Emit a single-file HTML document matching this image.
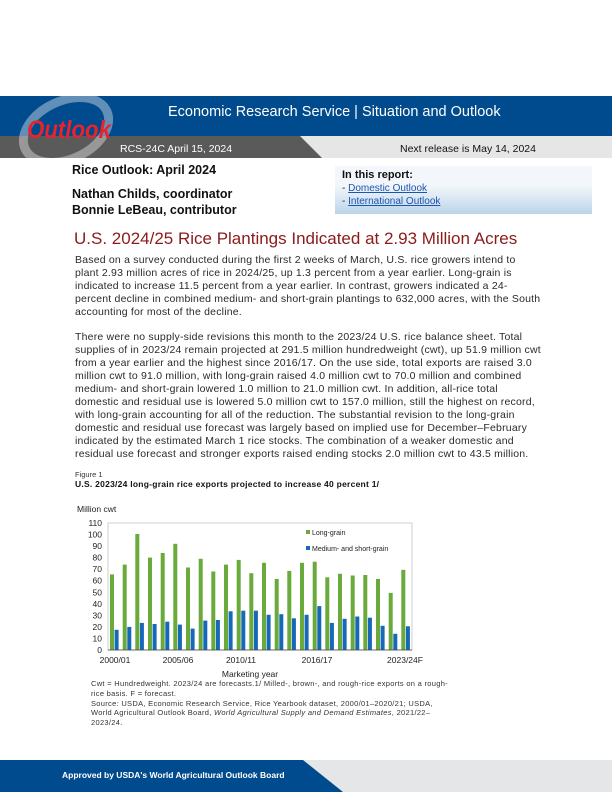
<!DOCTYPE html>
<html><head><meta charset="utf-8"><style>
*{margin:0;padding:0;box-sizing:border-box}
body{width:612px;height:792px;background:#fff;position:relative;overflow:hidden;font-family:"Liberation Sans",Arial,sans-serif;color:#222}
.a{position:absolute;white-space:nowrap}
.p{position:absolute;left:75px;font-size:10.5px;line-height:13px;letter-spacing:0.2px;color:#2a2a2a;white-space:nowrap}
a{color:#1a56b0;text-decoration:underline}
</style></head><body>
<svg class="a" style="left:0;top:96px" width="612" height="64">
<rect x="0" y="0" width="612" height="40" fill="#004b8d"/>
<rect x="0" y="40" width="612" height="22" fill="#e6e6e6"/>
<polygon points="0,40 300,40 322,62 0,62" fill="#5a5a5a"/>
<ellipse cx="66" cy="34" rx="45" ry="29" transform="rotate(-25 66 34)" fill="none" stroke="#ffffff" stroke-opacity="0.38" stroke-width="9"/>
<text x="27" y="42" font-family="Liberation Sans" font-style="italic" font-weight="bold" font-size="25" fill="#e8232b" textLength="84" lengthAdjust="spacingAndGlyphs">Outlook</text>
</svg>
<div class="a" style="left:168px;top:104px;font-size:14.5px;color:#fff">Economic Research Service | Situation and Outlook</div>
<div class="a" style="left:120px;top:143px;font-size:10.5px;color:#fff">RCS-24C April 15, 2024</div>
<div class="a" style="left:400px;top:143px;font-size:10.5px;color:#111">Next release is May 14, 2024</div>
<div class="a" style="left:72px;top:163px;font-size:12.5px;font-weight:bold;color:#111">Rice Outlook: April 2024</div>
<div class="a" style="left:72px;top:186px;font-size:12.5px;font-weight:bold;color:#111;line-height:16px">Nathan Childs, coordinator<br>Bonnie LeBeau, contributor</div>
<div class="a" style="left:335px;top:166px;width:257px;height:48px;background:linear-gradient(#f3f7fb,#f3f7fb 40%,#bcd4ea)"></div>
<div class="a" style="left:342px;top:169px;font-size:11px;font-weight:bold;color:#111">In this report:</div>
<div class="a" style="left:342px;top:183px;font-size:10px;line-height:12.5px">- <a>Domestic Outlook</a><br>- <a>International Outlook</a></div>
<div class="a" style="left:74px;top:229px;font-size:17px;color:#8b1a1a">U.S. 2024/25 Rice Plantings Indicated at 2.93 Million Acres</div>
<div class="p" style="top:254px">Based on a survey conducted during the first 2 weeks of March, U.S. rice growers intend to<br>plant 2.93 million acres of rice in 2024/25, up 1.3 percent from a year earlier. Long-grain is<br>indicated to increase 11.5 percent from a year earlier. In contrast, growers indicated a 24-<br>percent decline in combined medium- and short-grain plantings to 632,000 acres, with the South<br>accounting for most of the decline.</div>
<div class="p" style="top:331px">There were no supply-side revisions this month to the 2023/24 U.S. rice balance sheet. Total<br>supplies of in 2023/24 remain projected at 291.5 million hundredweight (cwt), up 51.9 million cwt<br>from a year earlier and the highest since 2016/17. On the use side, total exports are raised 3.0<br>million cwt to 91.0 million, with long-grain raised 4.0 million cwt to 70.0 million and combined<br>medium- and short-grain lowered 1.0 million to 21.0 million cwt. In addition, all-rice total<br>domestic and residual use is lowered 5.0 million cwt to 157.0 million, still the highest on record,<br>with long-grain accounting for all of the reduction. The substantial revision to the long-grain<br>domestic and residual use forecast was largely based on implied use for December–February<br>indicated by the estimated March 1 rice stocks. The combination of a weaker domestic and<br>residual use forecast and stronger exports raised ending stocks 2.0 million cwt to 43.5 million.</div>
<div class="a" style="left:75px;top:470px;font-size:7.5px;color:#333">Figure 1</div>
<div class="a" style="left:75px;top:479px;font-size:8.5px;font-weight:bold;color:#111;letter-spacing:0.25px">U.S. 2023/24 long-grain rice exports projected to increase 40 percent 1/</div>
<svg class="a" style="left:60px;top:500px" width="370" height="180" font-family="Liberation Sans" font-size="8.5" fill="#222">
<text x="17" y="12">Million cwt</text>
<rect x="48" y="23" width="304" height="127" fill="none" stroke="#bbb" stroke-width="0.7"/>
<g text-anchor="end">
<text x="42" y="153">0</text><text x="42" y="141.5">10</text><text x="42" y="130">20</text><text x="42" y="118.4">30</text><text x="42" y="106.8">40</text><text x="42" y="95.3">50</text><text x="42" y="83.7">60</text><text x="42" y="72.2">70</text><text x="42" y="60.6">80</text><text x="42" y="49.1">90</text><text x="42" y="37.5">100</text><text x="42" y="26">110</text>
</g>
<g transform="translate(0,150) scale(1,-1)">
<g fill="#6aaa3a">
<rect x="50" y="0" width="4" height="75.6"/><rect x="62.7" y="0" width="4" height="85.4"/><rect x="75.3" y="0" width="4" height="116"/><rect x="88" y="0" width="4" height="92.4"/><rect x="100.7" y="0" width="4" height="97"/><rect x="113.3" y="0" width="4" height="106.2"/><rect x="126" y="0" width="4" height="82.5"/><rect x="138.7" y="0" width="4" height="91.2"/><rect x="151.3" y="0" width="4" height="78.5"/><rect x="164" y="0" width="4" height="85.4"/><rect x="176.7" y="0" width="4" height="90.1"/><rect x="189.3" y="0" width="4" height="76.8"/><rect x="202" y="0" width="4" height="87.2"/><rect x="214.7" y="0" width="4" height="71"/><rect x="227.3" y="0" width="4" height="79.1"/><rect x="240" y="0" width="4" height="87.2"/><rect x="252.7" y="0" width="4" height="88.3"/><rect x="265.3" y="0" width="4" height="72.7"/><rect x="278" y="0" width="4" height="76.2"/><rect x="290.7" y="0" width="4" height="74.5"/><rect x="303.3" y="0" width="4" height="75"/><rect x="316" y="0" width="4" height="71"/><rect x="328.7" y="0" width="4" height="57.1"/><rect x="341.3" y="0" width="4" height="80.2"/>
</g>
<g fill="#1668b8" transform="translate(4.6,0)">
<rect x="50" y="0" width="4" height="20.2"/><rect x="62.7" y="0" width="4" height="23.1"/><rect x="75.3" y="0" width="4" height="27.1"/><rect x="88" y="0" width="4" height="26"/><rect x="100.7" y="0" width="4" height="28.3"/><rect x="113.3" y="0" width="4" height="25.4"/><rect x="126" y="0" width="4" height="21.4"/><rect x="138.7" y="0" width="4" height="29.4"/><rect x="151.3" y="0" width="4" height="30"/><rect x="164" y="0" width="4" height="38.7"/><rect x="176.7" y="0" width="4" height="39.3"/><rect x="189.3" y="0" width="4" height="39.3"/><rect x="202" y="0" width="4" height="35.2"/><rect x="214.7" y="0" width="4" height="35.8"/><rect x="227.3" y="0" width="4" height="31.7"/><rect x="240" y="0" width="4" height="35.2"/><rect x="252.7" y="0" width="4" height="43.9"/><rect x="265.3" y="0" width="4" height="27.1"/><rect x="278" y="0" width="4" height="31.2"/><rect x="290.7" y="0" width="4" height="33.5"/><rect x="303.3" y="0" width="4" height="32.3"/><rect x="316" y="0" width="4" height="24.2"/><rect x="328.7" y="0" width="4" height="16.2"/><rect x="341.3" y="0" width="4" height="23.7"/>
</g>
</g>
<line x1="48" x2="352" y1="150" y2="150" stroke="#444" stroke-width="0.8"/>
<g text-anchor="middle">
<text x="55" y="163">2000/01</text><text x="118" y="163">2005/06</text><text x="181" y="163">2010/11</text><text x="257" y="163">2016/17</text><text x="345" y="163">2023/24F</text>
<text x="190" y="177">Marketing year</text>
</g>
<rect x="246" y="30" width="4" height="4" fill="#6aaa3a"/><text x="252" y="35" font-size="7">Long-grain</text>
<rect x="246" y="46" width="4" height="4" fill="#1668b8"/><text x="252" y="51" font-size="7">Medium- and short-grain</text>
</svg>
<div class="a" style="left:91px;top:679px;font-size:7.5px;line-height:9.8px;color:#333;letter-spacing:0.3px">Cwt = Hundredweight. 2023/24 are forecasts.1/ Milled-, brown-, and rough-rice exports on a rough-<br>rice basis. F = forecast.<br>Source: USDA, Economic Research Service, Rice Yearbook dataset, 2000/01–2020/21; USDA,<br>World Agricultural Outlook Board, <i>World Agricultural Supply and Demand Estimates</i>, 2021/22–<br>2023/24.</div>
<svg class="a" style="left:0;top:760px" width="612" height="32">
<rect width="612" height="32" fill="#e5e6e8"/>
<polygon points="0,0 303,0 343,32 0,32" fill="#004b8d"/>
</svg>
<div class="a" style="left:62px;top:770px;font-size:8.5px;font-weight:bold;color:#fff">Approved by USDA's World Agricultural Outlook Board</div>
</body></html>
